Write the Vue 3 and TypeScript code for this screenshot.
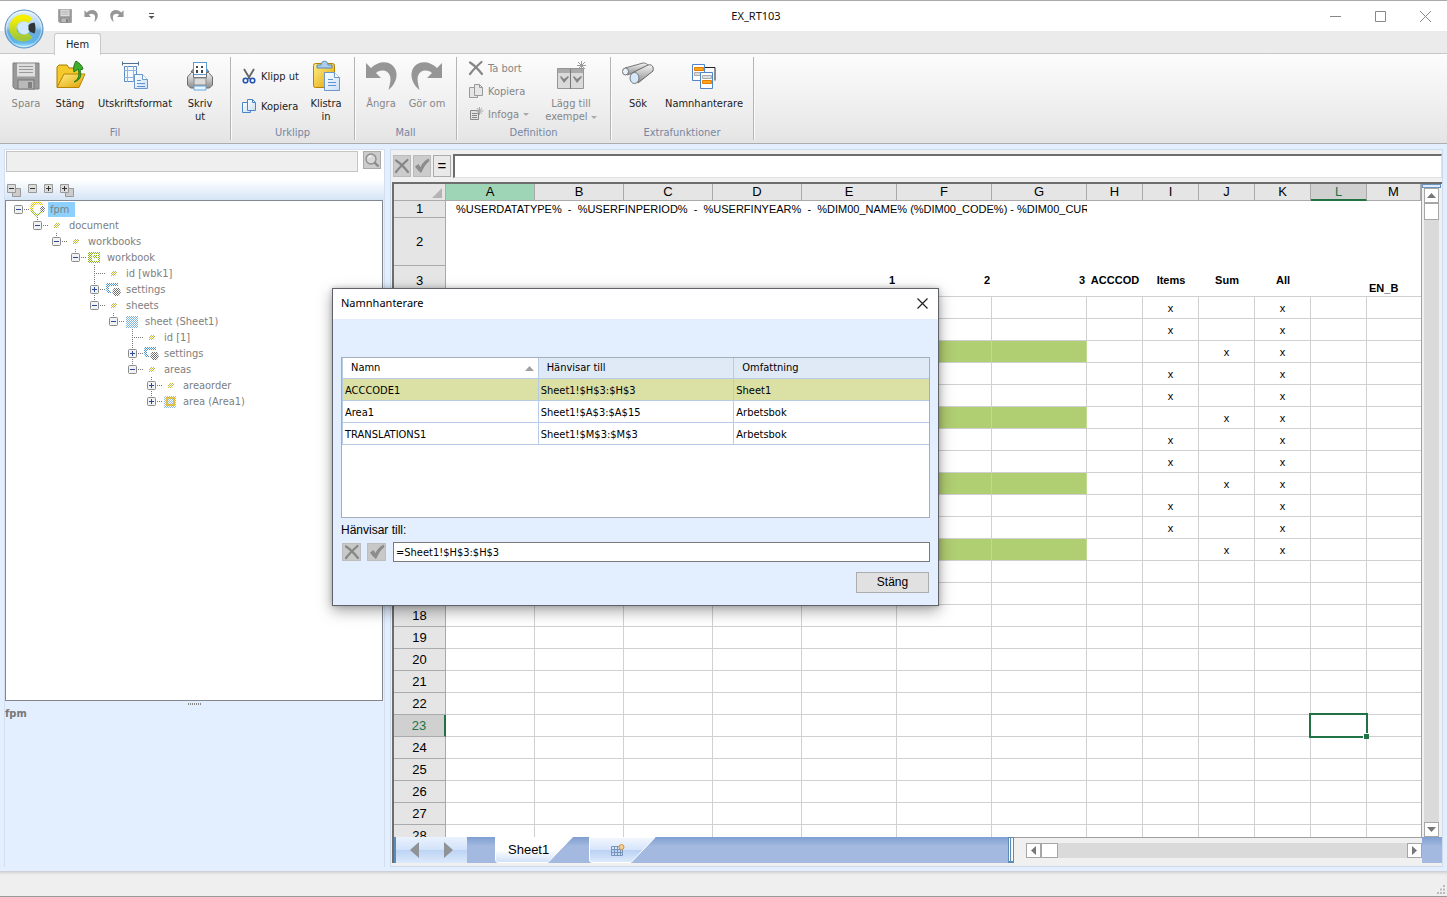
<script setup lang="ts">
import { ref } from 'vue'

interface TreeNode { label: string; depth: number; box: '' | '+' | '-'; icon: string; last: boolean }
interface DefinedName { name: string; refers: string; scope: string }

const nodes: TreeNode[] = [
  { label: 'fpm', depth: 0, box: '-', icon: 'root', last: true },
  { label: 'document', depth: 1, box: '-', icon: 'dot', last: true },
  { label: 'workbooks', depth: 2, box: '-', icon: 'dot', last: true },
  { label: 'workbook', depth: 3, box: '-', icon: 'book', last: true },
  { label: 'id [wbk1]', depth: 4, box: '', icon: 'dot', last: false },
  { label: 'settings', depth: 4, box: '+', icon: 'gear', last: false },
  { label: 'sheets', depth: 4, box: '-', icon: 'dot', last: true },
  { label: 'sheet (Sheet1)', depth: 5, box: '-', icon: 'sheet', last: true },
  { label: 'id [1]', depth: 6, box: '', icon: 'dot', last: false },
  { label: 'settings', depth: 6, box: '+', icon: 'gear', last: false },
  { label: 'areas', depth: 6, box: '-', icon: 'dot', last: true },
  { label: 'areaorder', depth: 7, box: '+', icon: 'dot', last: false },
  { label: 'area (Area1)', depth: 7, box: '+', icon: 'area', last: true },
]

const names: DefinedName[] = [
  { name: 'ACCCODE1', refers: 'Sheet1!$H$3:$H$3', scope: 'Sheet1' },
  { name: 'Area1', refers: 'Sheet1!$A$3:$A$15', scope: 'Arbetsbok' },
  { name: 'TRANSLATIONS1', refers: 'Sheet1!$M$3:$M$3', scope: 'Arbetsbok' },
]
const chosen = ref(0)
const refersTo = ref('=Sheet1!$H$3:$H$3')
const formula = ref('')
const search = ref('')

const cols = 'ABCDEFGHIJKLM'.split('')
const rows = Array.from({ length: 25 }, (_, i) => i + 4)
const sumRows = [6, 9, 12, 15]

function cell(row: number, col: string): string {
  if (row > 15) return ''
  const sum = sumRows.includes(row)
  if (col === 'K') return 'x'
  if (col === 'I' && !sum) return 'x'
  if (col === 'J' && sum) return 'x'
  return ''
}
function isGreen(row: number, col: string): boolean {
  return sumRows.includes(row) && 'ABCDEFG'.includes(col)
}
</script>

<template>
  <div class="window">
    <svg class="defs" aria-hidden="true">
      <defs>
        <linearGradient id="gGray" x1="0" y1="0" x2="0" y2="1"><stop offset="0" stop-color="#f4f4f4" /><stop offset="1" stop-color="#8c8c8c" /></linearGradient>
        <linearGradient id="gGold" x1="0" y1="0" x2="1" y2="1"><stop offset="0" stop-color="#fff08a" /><stop offset="1" stop-color="#e0a200" /></linearGradient>
        <linearGradient id="gPage" x1="0" y1="0" x2="1" y2="1"><stop offset="0" stop-color="#ffffff" /><stop offset="1" stop-color="#c9dff6" /></linearGradient>
        <linearGradient id="gTab" x1="0" y1="0" x2="0" y2="1"><stop offset="0" stop-color="#f2f7fe" /><stop offset=".48" stop-color="#d6e5fb" /><stop offset=".5" stop-color="#b9d1f3" /><stop offset="1" stop-color="#deebfc" /></linearGradient>
        <linearGradient id="gSheetTab" x1="0" y1="0" x2="0" y2="1"><stop offset=".5" stop-color="#ffffff" /><stop offset="1" stop-color="#cfe0f8" /></linearGradient>
        <linearGradient id="gOrb" x1="0" y1="0" x2="0" y2="1"><stop offset="0" stop-color="#e6f2fb" /><stop offset=".45" stop-color="#a9d0ee" /><stop offset=".55" stop-color="#6aabdd" /><stop offset=".85" stop-color="#5fb4e8" /><stop offset="1" stop-color="#b4efff" /></linearGradient>
        <linearGradient id="gC" x1="0" y1="0" x2="0" y2="1"><stop offset="0" stop-color="#f6f000" /><stop offset="1" stop-color="#a2c93a" /></linearGradient>
        <pattern id="pYellow" width="2" height="2" patternUnits="userSpaceOnUse"><path d="M0 0h1v1H0zM1 1h1v1H1z" fill="#c3bd3e" /></pattern>
        <pattern id="pGreen" width="2" height="2" patternUnits="userSpaceOnUse"><path d="M0 0h1v1H0zM1 1h1v1H1z" fill="#84b818" /></pattern>
        <pattern id="pBlue" width="2" height="2" patternUnits="userSpaceOnUse"><path d="M0 0h1v1H0zM1 1h1v1H1z" fill="#4a95d0" /></pattern>
        <pattern id="pGray" width="2" height="2" patternUnits="userSpaceOnUse"><path d="M0 0h1v1H0zM1 1h1v1H1z" fill="#6c6c6c" /></pattern>
        <pattern id="pGold" width="2" height="2" patternUnits="userSpaceOnUse"><path d="M0 0h1v1H0zM1 1h1v1H1z" fill="#e3c000" /></pattern>
      </defs>
      <symbol id="cross" viewBox="0 0 16 16"><path d="M2 2.500C6 5 10 9 14 14M13.500 2C9 6 5 10 2 14" fill="none" stroke="#868686" stroke-width="2.200" stroke-linecap="round" /></symbol>
      <symbol id="tick" viewBox="0 0 16 16"><path d="M1.500 8.500l3-2 2 3.500C8 6 11 2.500 14.500 1 15 2 15 3 14.500 3.500 11 6 9 10 7 14.500 5 13 3 11 1.500 8.500z" fill="#8d8d8d" stroke="#7c7c7c" stroke-width=".6" /></symbol>
      <symbol id="floppy" viewBox="0 0 28 28"><path d="M1 1h26v26H3l-2-2z" fill="#999" stroke="#808080" /><rect x="5" y="1.500" width="18" height="13" fill="#dedede" /><path d="M7 4.500h14M7 7.500h14M7 10.500h14" stroke="#999" /><rect x="6" y="18" width="16" height="9" fill="#b9b9b9" stroke="#777" /><rect x="16" y="20" width="4" height="6" fill="#808080" /></symbol>
      <symbol id="undo" viewBox="0 0 32 32"><path d="M1 3v15h15l-5-5c5-4 12-3 14 3 1.300 4-.5 9-1.500 14C29 26 33 18 31 11 28 1 15-1 6 8z" fill="#969696" /></symbol>
    </svg>

    <header class="titlebar">
      <button class="orb" type="button" aria-label="Programmeny">
        <svg viewBox="0 0 40 40" width="40" height="40">
          <circle cx="20" cy="20" r="19" fill="url(#gOrb)" stroke="#5a8fc0" />
          <circle cx="20" cy="20" r="17.500" fill="none" stroke="#fff" stroke-opacity=".5" />
          <path d="M26 12A10 10 0 1 0 26 26" fill="none" stroke="url(#gC)" stroke-width="7" />
          <circle cx="20" cy="19" r="6.500" fill="#cfe8fa" />
          <path d="M26.500 14.500l4-1q2 5.500 0 11l-4-1.500-2-2v-5z" fill="#2f3436" />
        </svg>
      </button>
      <nav class="quick">
        <button type="button" aria-label="Spara"><svg width="14" height="14"><use href="#floppy" /></svg></button>
        <button type="button" aria-label="Ångra"><svg width="14" height="16"><use href="#undo" /></svg></button>
        <button type="button" aria-label="Gör om"><svg class="flip" width="14" height="16"><use href="#undo" /></svg></button>
        <button type="button" class="more" aria-label="Anpassa"><svg width="7" height="7" viewBox="0 0 7 7"><path d="M1 .5h5" stroke="#555" /><path d="M.5 3h6l-3 3z" fill="#555" /></svg></button>
      </nav>
      <h1>EX_RT103</h1>
      <div class="winbtns">
        <button type="button" aria-label="Minimera"><svg width="11" height="11"><path d="M0 5.500h11" stroke="#888" /></svg></button>
        <button type="button" aria-label="Maximera"><svg width="11" height="11"><path d="M.5.5h10v10H.5z" fill="none" stroke="#888" /></svg></button>
        <button type="button" aria-label="Stäng fönster"><svg width="11" height="11"><path d="M0 0l11 11M11 0L0 11" stroke="#888" /></svg></button>
      </div>
    </header>

    <div class="tabstrip"><button type="button" class="tab">Hem</button></div>

    <div class="ribbon">
      <section class="group fil">
        <div class="tools">
          <button type="button" class="big off w42">
            <svg width="32" height="32" viewBox="0 0 32 32"><use href="#floppy" x="2" y="2" width="28" height="28" /></svg>
            <span>Spara</span>
          </button>
          <button type="button" class="big w46">
            <svg width="32" height="32" viewBox="0 0 32 32">
              <path d="M3 27V7l2-2h8l2 3h10v6" fill="#f3c92c" stroke="#ad7a00" />
              <path d="M3 27.500L10 14h21l-6 13.500z" fill="url(#gGold)" stroke="#b98300" />
              <path d="M20 22c5-3 6-8 4-13l-4 3c-1-4 0-8 2-11 3 2 6 4 7 8l-3 1c2 7 0 10-6 12z" fill="#3fae2a" stroke="#1c7a12" />
            </svg>
            <span>Stäng</span>
          </button>
          <button type="button" class="big w84">
            <svg width="32" height="32" viewBox="0 0 32 32">
              <path d="M3 3.500h17M3.500 1.500v4M19.500 1.500v4" stroke="#4f6f93" fill="none" />
              <path d="M5.500 6.500h12v15h-12z" fill="#f5faff" stroke="#5b8cc4" /><path d="M8.500 6v16M14.500 6v16M5 10.500h13M5 17.500h13" stroke="#8fb3dc" />
              <path d="M15.500 14.500h8l5 5v9h-13z" fill="url(#gPage)" stroke="#6a96cb" /><path d="M23.500 14.500v5h5" fill="#fff" stroke="#6a96cb" /><path d="M18 20.500h4M18 23.500h8M18 26.500h8" stroke="#5f93d1" />
            </svg>
            <span>Utskriftsformat</span>
          </button>
          <button type="button" class="big w46">
            <svg width="32" height="32" viewBox="0 0 32 32">
              <path d="M7 12l3-4h12l3 4z" fill="#aaa" stroke="#666" />
              <rect x="9.500" y="2.500" width="13" height="12" fill="#fff" stroke="#5f9bd3" />
              <path d="M12 6h2v2h-2zM17 6h2v2h-2zM12 10h2v3h-2zM17 10h2v3h-2z" fill="#444" />
              <path d="M3.500 17l4-4.500h2v5h13v-5h2l4 4.500v8l-3 3h-19l-3-3z" fill="url(#gGray)" stroke="#6d6d6d" />
              <path d="M10 18h12v7H10z" fill="#dadada" stroke="#8a8a8a" />
              <path d="M10 26h12v4H10z" fill="#eaf6ff" stroke="#65a7dc" />
            </svg>
            <span>Skriv<br>ut</span>
          </button>
        </div>
        <h2>Fil</h2>
      </section>

      <section class="group urklipp">
        <div class="tools">
          <div class="stack wide">
            <button type="button" class="small">
              <svg width="16" height="16" viewBox="0 0 16 16"><path d="M3 1l6 10M13 1L7 11" stroke="#666" stroke-width="1.800" /><circle cx="4.500" cy="12.500" r="2.300" fill="none" stroke="#2554b8" stroke-width="1.600" /><circle cx="11.500" cy="12.500" r="2.300" fill="none" stroke="#2554b8" stroke-width="1.600" /></svg>
              <span>Klipp ut</span>
            </button>
            <button type="button" class="small">
              <svg width="16" height="16" viewBox="0 0 16 16"><path d="M1.500 4.500h6l2 2v8h-8z" fill="url(#gPage)" stroke="#4b86c6" /><path d="M6.500 1.500h5l3 3v8h-8z" fill="url(#gPage)" stroke="#4b86c6" /><path d="M11.500 1.500v3h3" fill="none" stroke="#4b86c6" /></svg>
              <span>Kopiera</span>
            </button>
          </div>
          <button type="button" class="big w46">
            <svg width="32" height="32" viewBox="0 0 32 32">
              <rect x="3.500" y="3.500" width="21" height="24" rx="2" fill="url(#gGold)" stroke="#b58200" />
              <path d="M7 8V5h4c0-5 7-5 7 0h4v3z" fill="#a9cdee" stroke="#5b87b5" />
              <path d="M14.500 12.500h10l5 5v13h-15z" fill="url(#gPage)" stroke="#6a96cb" /><path d="M24.500 12.500v5h5" fill="#fff" stroke="#6a96cb" /><path d="M18 19.500h5M18 22.500h8M18 25.500h8" stroke="#5f93d1" />
            </svg>
            <span>Klistra<br>in</span>
          </button>
        </div>
        <h2>Urklipp</h2>
      </section>

      <section class="group mall">
        <div class="tools">
          <button type="button" class="big off w46"><svg width="32" height="32"><use href="#undo" /></svg><span>Ångra</span></button>
          <button type="button" class="big off w46"><svg class="flip" width="32" height="32"><use href="#undo" /></svg><span>Gör om</span></button>
        </div>
        <h2>Mall</h2>
      </section>

      <section class="group definition">
        <div class="tools">
          <div class="stack">
            <button type="button" class="small off"><svg width="16" height="16"><use href="#cross" /></svg><span>Ta bort</span></button>
            <button type="button" class="small off">
              <svg width="16" height="16" viewBox="0 0 16 16"><path d="M1.500 4.500h6l2 2v8h-8z" fill="#e6e6e6" stroke="#999" /><path d="M6.500 1.500h5l3 3v8h-8z" fill="#e6e6e6" stroke="#999" /><path d="M11.500 1.500v3h3" fill="none" stroke="#999" /></svg>
              <span>Kopiera</span>
            </button>
            <button type="button" class="small off">
              <svg width="16" height="16" viewBox="0 0 16 16"><path d="M2.500 4.500h8v9h-8z" fill="#e3e3e3" stroke="#888" /><path d="M4 7.500h5M4 9.500h5M4 11.500h5" stroke="#888" /><path d="M11.500 1v8M7.500 5h8M9 2l5 6M14 2L9 8" stroke="#aaa" /></svg>
              <span>Infoga</span><i class="caret" />
            </button>
          </div>
          <button type="button" class="big off w66">
            <svg width="32" height="32" viewBox="0 0 32 32"><path d="M2.500 8.500h26v20h-26z" fill="#dadada" stroke="#959595" /><path d="M3 9h25v4H3z" fill="#aaa" /><path d="M15.500 9v20" stroke="#777" /><path d="M5 17l4 6 5-6-1-1-4 3-3-3zM18 17l4 6 5-6-1-1-4 3-3-3z" fill="#858585" /><path d="M26.500 1v9M22 5.500h9M23 2l7 7M30 2l-7 7" stroke="#9b9b9b" /></svg>
            <span>Lägg till<br>exempel <i class="caret" /></span>
          </button>
        </div>
        <h2>Definition</h2>
      </section>

      <section class="group extra">
        <div class="tools">
          <button type="button" class="big w42">
            <svg width="34" height="32" viewBox="0 0 34 32">
              <path d="M4 8L22 3c4 0 6 2 5 5L6 15z" fill="url(#gGray)" stroke="#777" /><ellipse cx="4.500" cy="11.500" rx="3" ry="3.500" fill="#e9f2fb" stroke="#777" />
              <path d="M11 13L27 5c4-1 6 2 5 6L17 23z" fill="url(#gGray)" stroke="#666" /><ellipse cx="13.500" cy="18" rx="4.500" ry="5.500" fill="#d5e7fa" stroke="#777" />
            </svg>
            <span>Sök</span>
          </button>
          <button type="button" class="big w90">
            <svg width="32" height="32" viewBox="0 0 32 32">
              <path d="M14 7.500h13v13" fill="none" stroke="#222" />
              <path d="M4.500 4.500h12v16h-12z" fill="#fff" stroke="#4f85c9" /><path d="M6.500 7.500h9v3h-9z" fill="#ffa318" stroke="#e47d00" /><path d="M6.500 12.500h8v3h-8z" fill="#ddd" stroke="#aaa" />
              <path d="M12.500 12.500h12v16h-12z" fill="#fff" stroke="#4f85c9" /><path d="M14.500 15.500h9v3h-9z" fill="#ddd" stroke="#aaa" /><path d="M14.500 20.500h9v3h-9z" fill="#ffa318" stroke="#e47d00" />
            </svg>
            <span>Namnhanterare</span>
          </button>
        </div>
        <h2>Extrafunktioner</h2>
      </section>
    </div>

    <main class="body">
      <aside class="side">
        <div class="searchrow">
          <input v-model="search" type="text" aria-label="Sök i trädet">
          <button type="button" aria-label="Sök"><svg width="16" height="16" viewBox="0 0 16 16"><circle cx="7" cy="7" r="5" fill="#d9d9d9" stroke="#8f8f8f" stroke-width="1.400" /><path d="M4.500 6q.5-2 3-2" fill="none" stroke="#fff" /><path d="M10.500 10.500l4 4" stroke="#8a8a8a" stroke-width="2.400" /></svg></button>
        </div>
        <div class="treetools">
          <button type="button" aria-label="Fäll ihop alla"><svg width="14" height="13" viewBox="0 0 14 13"><path d="M5.500 4.500h8v8h-8z" fill="#ccc" stroke="#999" /><path d="M.5.5h8v8h-8z" fill="#dcdcdc" stroke="#999" /><path d="M2 4.500h5" stroke="#333" /></svg></button>
          <button type="button" aria-label="Fäll ihop"><svg width="9" height="13" viewBox="0 0 9 13"><path d="M.5.5h8v8h-8z" fill="#dcdcdc" stroke="#999" /><path d="M2 4.500h5" stroke="#333" /></svg></button>
          <button type="button" aria-label="Expandera"><svg width="9" height="13" viewBox="0 0 9 13"><path d="M.5.5h8v8h-8z" fill="#dcdcdc" stroke="#999" /><path d="M2 4.500h5M4.500 2v5" stroke="#333" /></svg></button>
          <button type="button" aria-label="Expandera alla"><svg width="14" height="13" viewBox="0 0 14 13"><path d="M5.500 4.500h8v8h-8z" fill="#ccc" stroke="#999" /><path d="M.5.5h8v8h-8z" fill="#dcdcdc" stroke="#999" /><path d="M2 4.500h5M4.500 2v5" stroke="#333" /></svg></button>
        </div>
        <ul class="tree">
          <li v-for="(n, i) in nodes" :key="i" :style="{ paddingLeft: 8 + n.depth * 19 + 'px' }">
            <svg class="joint" width="15" height="16" viewBox="0 0 15 16">
              <path v-if="n.depth" d="M4.500 0v8" stroke="#777" stroke-dasharray="1 1" />
              <path v-if="!n.last" d="M4.500 8v8" stroke="#777" stroke-dasharray="1 1" />
              <path d="M4 8.500h11" stroke="#777" stroke-dasharray="1 1" />
              <g v-if="n.box"><rect x=".5" y="4.500" width="8" height="8" rx="1" fill="#f2f2f2" stroke="#8b8b8b" /><path :d="n.box === '+' ? 'M2 8.500h5M4.500 6v5' : 'M2 8.500h5'" stroke="#2b4a9b" /></g>
            </svg>
            <svg class="nicon" width="16" height="16" viewBox="0 0 16 16">
              <g v-if="n.icon === 'dot'"><path d="M6 11V8l2-2h4v2l-2 3z" fill="url(#pYellow)" /></g>
              <g v-else-if="n.icon === 'root'"><path d="M4 1h8l2 3h-3L9 3 6 4 4 7v4H2L1 7l1-4z" fill="url(#pGold)" /><path d="M1 8h3l1 3 3 2 3-2h3l-6 5-5-4z" fill="url(#pGreen)" /><path d="M12 5h3l1 3-1 3h-3l-1-3z" fill="url(#pGray)" /></g>
              <g v-else-if="n.icon === 'book'"><path d="M2 3h12v11H2zM6 5v7h6V5z" fill-rule="evenodd" fill="url(#pGreen)" /><path d="M7 6h4v3H7z" fill="url(#pGreen)" /></g>
              <g v-else-if="n.icon === 'gear'"><path d="M2 2h11v3H4v5h2v2H3L1 9V4z" fill="url(#pBlue)" /><path d="M9 7h5l2 4-2 4h-4l-3-4z" fill="url(#pGray)" /></g>
              <g v-else-if="n.icon === 'sheet'"><path d="M2 3h12v12H2z" fill="url(#pBlue)" opacity=".7" /></g>
              <g v-else><path d="M2 3h12v12H2z" fill="url(#pBlue)" opacity=".6" /><path d="M4 4h9v9H4zM6 6v5h5V6z" fill-rule="evenodd" fill="#e9b100" opacity=".7" /></g>
            </svg>
            <span :class="['tlabel', { picked: i === 0 }]">{{ n.label }}</span>
          </li>
        </ul>
        <div class="grip"><i v-for="k in 7" :key="k" /></div>
        <div class="info">fpm</div>
      </aside>

      <section class="book">
        <div class="formulabar">
          <button type="button" class="fx" aria-label="Avbryt"><svg width="16" height="16"><use href="#cross" /></svg></button>
          <button type="button" class="fx" aria-label="Godkänn"><svg width="16" height="16"><use href="#tick" /></svg></button>
          <button type="button" class="fx eq">=</button>
          <input v-model="formula" type="text" aria-label="Formel">
        </div>
        <div class="sheetframe">
          <div class="gridrow">
            <div class="gridwrap">
              <table class="grid">
                <colgroup>
                  <col class="c52"><col v-for="k in 4" :key="'a' + k" class="c89"><col v-for="k in 3" :key="'b' + k" class="c95"><col v-for="k in 5" :key="'c' + k" class="c56"><col>
                </colgroup>
                <thead>
                  <tr><th class="corner"><svg width="10" height="10"><path d="M10 0v10H0z" fill="#b4b4b4" /></svg></th><th v-for="c in cols" :key="c" :class="{ first: c === 'A', current: c === 'L' }">{{ c }}</th></tr>
                </thead>
                <tbody>
                  <tr class="r1 plain"><th>1</th><td colspan="7" class="heading">%USERDATATYPE% &nbsp;-&nbsp; %USERFINPERIOD% &nbsp;-&nbsp; %USERFINYEAR% &nbsp;-&nbsp; %DIM00_NAME% (%DIM00_CODE%) - %DIM00_CUR</td><td colspan="6" /></tr>
                  <tr class="r2 plain"><th>2</th><td colspan="13" /></tr>
                  <tr class="r3 plain"><th>3</th><td colspan="4" /><td class="num">1</td><td class="num">2</td><td class="num">3</td><td>ACCCOD</td><td>Items</td><td>Sum</td><td>All</td><td /><td class="low">EN_B</td></tr>
                  <tr v-for="r in rows" :key="r">
                    <th :class="{ current: r === 23 }">{{ r }}</th>
                    <td v-for="c in cols" :key="c" :class="{ green: isGreen(r, c) }">{{ cell(r, c) }}<i v-if="r === 23 && c === 'L'" class="cursor" /></td>
                  </tr>
                </tbody>
              </table>
            </div>
            <div class="vscroll">
              <div class="split" />
              <button type="button" aria-label="Rulla upp"><svg width="9" height="5"><path d="M0 5l4.500-5L9 5z" fill="#777" /></svg></button>
              <div class="vtrack"><div class="thumb" /></div>
              <button type="button" aria-label="Rulla ned"><svg width="9" height="5"><path d="M0 0l4.500 5L9 0z" fill="#777" /></svg></button>
            </div>
          </div>
          <div class="sheetbar">
            <div class="tabs">
              <div class="tabnav">
                <button type="button" aria-label="Föregående blad"><svg width="9" height="16"><path d="M9 0v16L0 8z" fill="#8f9296" /></svg></button>
                <button type="button" aria-label="Nästa blad"><svg width="9" height="16"><path d="M0 0v16l9-8z" fill="#8f9296" /></svg></button>
              </div>
              <button type="button" class="stab">
                <svg width="78" height="26"><path d="M.5 0h77L53 25.500H3q-2.500 0-2.500-3z" fill="url(#gSheetTab)" stroke="#fff" /></svg>
                <span>Sheet1</span>
              </button>
              <button type="button" class="stab ntab" aria-label="Nytt blad">
                <svg width="67" height="26"><path d="M.5.500h65.500L42 25.500H3q-2.500 0-2.500-3z" fill="url(#gTab)" stroke="#fff" /><path d="M22.500 9.500h11v9h-11zM22 12.500h12M22 15.500h12M25.500 9v10M28.500 9v10M31.500 9v10" fill="none" stroke="#7894ba" /><circle cx="32.500" cy="10" r="2.500" fill="#f1cf9a" stroke="#dc9433" /></svg>
              </button>
            </div>
            <div class="hsplit" />
            <div class="hscroll">
              <button type="button" aria-label="Rulla vänster"><svg width="5" height="9"><path d="M5 0L0 4.500 5 9z" fill="#777" /></svg></button>
              <div class="htrack"><div class="thumb" /></div>
              <button type="button" aria-label="Rulla höger"><svg width="5" height="9"><path d="M0 0l5 4.500L0 9z" fill="#777" /></svg></button>
            </div>
            <div class="fill" />
          </div>
        </div>
      </section>
    </main>

    <footer class="status"><svg width="9" height="9" viewBox="0 0 9 9"><path d="M7 0h2v2H7zM4 3.500h2v2H4zM7 3.500h2v2H7zM1 7h2v2H1zM4 7h2v2H4zM7 7h2v2H7z" fill="#bbb" /></svg></footer>

    <section class="dialog" role="dialog" aria-labelledby="dlgTitle">
      <header>
        <h2 id="dlgTitle">Namnhanterare</h2>
        <button type="button" aria-label="Stäng dialog"><svg width="11" height="11"><path d="M.5.500l10 10M10.500.500l-10 10" stroke="#222" stroke-width="1.200" /></svg></button>
      </header>
      <div class="dbody">
        <div class="listbox">
          <table>
            <thead><tr><th class="sorted"><span>Namn</span><svg width="9" height="5"><path d="M0 5l4.500-5L9 5z" fill="#a0a0a0" /></svg></th><th>Hänvisar till</th><th>Omfattning</th></tr></thead>
            <tbody>
              <tr v-for="(n, i) in names" :key="n.name" :class="{ chosen: i === chosen }" @click="chosen = i"><td>{{ n.name }}</td><td>{{ n.refers }}</td><td>{{ n.scope }}</td></tr>
            </tbody>
          </table>
        </div>
        <label for="refers">Hänvisar till:</label>
        <div class="refrow">
          <button type="button" aria-label="Avbryt"><svg width="16" height="16"><use href="#cross" /></svg></button>
          <button type="button" aria-label="Godkänn"><svg width="16" height="16"><use href="#tick" /></svg></button>
          <input id="refers" v-model="refersTo" type="text">
        </div>
        <button type="button" class="close">Stäng</button>
      </div>
    </section>
  </div>
</template>

<style>
html, body { margin: 0; }
</style>

<style scoped>
* { box-sizing: border-box; }
.window { position: relative; display: flex; flex-direction: column; height: 100vh; overflow: hidden; background: #fff; color: #222; font: 11px/13px "DejaVu Sans Condensed", "DejaVu Sans", sans-serif; }
.defs { position: absolute; width: 0; height: 0; }
button { display: flex; align-items: center; justify-content: center; margin: 0; padding: 0; border: 0; background: none; color: inherit; font: inherit; }
input { margin: 0; padding: 0 2px; border-radius: 0; outline: 0; font: inherit; color: #000; }
h1, h2 { margin: 0; font: inherit; }
svg { display: block; flex: none; }
.flip { transform: scaleX(-1); }

.titlebar { position: relative; flex: none; display: flex; align-items: center; height: 31px; padding-left: 58px; border-top: 1px solid #aaa; }
.orb { position: absolute; left: 4px; top: 8px; z-index: 2; }
.quick { flex: none; display: flex; align-items: center; gap: 12px; width: 224px; }
.quick .more { margin-left: 12px; }
.titlebar h1 { flex: 1; text-align: center; font: 11px/16px "Noto Sans", sans-serif; color: #111; }
.winbtns { flex: none; display: flex; gap: 34px; width: 217px; justify-content: flex-end; padding-right: 16px; }

.tabstrip { flex: none; height: 23px; padding: 2px 0 0 54px; background: #ebebeb; border-bottom: 1px solid #c9c9c9; }
.tab { position: relative; height: 22px; width: 47px; background: #fcfcfc; border: 1px solid #c9c9c9; border-bottom: 0; border-radius: 3px 3px 0 0; }

.ribbon { flex: none; display: flex; height: 90px; padding: 3px 0; background: linear-gradient(#fcfcfc, #f0f0f0 55%, #e4e4e4); border-bottom: 1px solid #adadad; box-shadow: 0 1px 2px #c4c4c4; }
.group { display: flex; flex-direction: column; border-right: 1px solid #b5b5b5; box-shadow: 1px 0 #fafafa; }
.group h2 { text-align: center; color: #7686a3; line-height: 14px; }
.tools { flex: 1; display: flex; align-items: flex-start; padding-top: 3px; }
.fil { width: 231px; }
.fil .tools { padding-left: 5px; }
.urklipp { width: 124px; }
.urklipp .tools { padding-left: 10px; }
.mall { width: 102px; }
.mall .tools { padding-left: 3px; }
.definition { width: 154px; }
.definition .tools { padding-left: 11px; }
.extra { width: 143px; }
.extra .tools { padding-left: 6px; }
.big { flex-direction: column; flex: none; text-align: center; gap: 5px; white-space: nowrap; }
.off { color: #868686; }
.w42 { width: 42px; } .w46 { width: 46px; } .w66 { width: 66px; } .w84 { width: 84px; } .w90 { width: 90px; }
.stack { display: flex; flex-direction: column; gap: 7px; width: 70px; }
.stack.wide { gap: 14px; width: 62px; padding-top: 8px; }
.small { height: 16px; justify-content: flex-start; gap: 4px; white-space: nowrap; }
.caret { display: inline-block; vertical-align: middle; border: 3px solid transparent; border-top-color: #aaa; border-bottom: 0; }

.body { flex: 1; min-height: 0; display: flex; gap: 5px; padding: 5px 4px 4px; background: #e3eefe; }
.side { flex: none; width: 381px; display: flex; flex-direction: column; border: 1px solid #d3dfee; border-width: 1px 1px 0 1px; }
.searchrow { display: flex; align-items: flex-start; gap: 5px; height: 24px; padding: 1px 3px 0 1px; background: #fff; }
.searchrow input { flex: 1; height: 21px; border: 1px solid #c5c5c5; background: #efefef; }
.searchrow button { width: 18px; height: 18px; border: 1px solid #aaa; background: #ccc; }
.treetools { display: flex; align-items: center; gap: 7px; height: 26px; padding: 6px 2px 0; background: linear-gradient(#fff, #fff 20%, #d5e4f6); }
.tree { flex: 1; min-height: 0; margin: 0; padding: 0; list-style: none; background: #fff; border: 1px solid #828790; width: 378px; overflow: hidden; }
.tree li { display: flex; align-items: center; height: 16px; }
.tlabel { margin-left: 3px; padding: 0 4px 0 2px; line-height: 15px; color: #808080; }
.picked { padding-right: 6px; background: #8cd0fd; }
.grip { display: flex; gap: 1px; justify-content: center; height: 4px; padding-top: 2px; }
.grip i { width: 1px; height: 2px; background: #888; }
.info { height: 162px; padding-top: 2px; font-weight: bold; color: #777; }

.book { flex: 1; min-width: 0; display: flex; flex-direction: column; padding: 4px 0 3px 2px; background: #f0f0f0; border: 1px solid #ccdcec; }
.formulabar { flex: none; display: flex; gap: 2px; height: 24px; align-items: center; }
.fx { width: 18px; height: 22px; background: #cbcbcb; border: 1px solid #bbb; }
.fx.eq { background: #e9e9e9; border-color: #aaa; font: 15px/18px "Liberation Sans", sans-serif; color: #000; }
.formulabar input { flex: 1; height: 24px; background: #fff; border: 2px solid #6d6d6d; border-width: 2px 1px 1px 2px; border-right-color: #e0e0e0; border-bottom-color: #e0e0e0; }
.sheetframe { flex: 1; min-height: 0; margin: 4px 0 0 -1px; display: flex; flex-direction: column; border: solid #6d6d6d; border-width: 2px 0 0 2px; }
.gridrow { flex: 1; min-height: 0; display: flex; }
.gridwrap { flex: 1; min-width: 0; overflow: hidden; background: #fff; border-right: 1px solid #a0a0a0; }
.grid { width: 100%; table-layout: fixed; border-collapse: separate; border-spacing: 0; font: 11px/14px "Liberation Sans", Arial, sans-serif; color: #000; }
.c52 { width: 52px; } .c89 { width: 89px; } .c95 { width: 95px; } .c56 { width: 56px; }
.grid th { padding: 0; height: 22px; background: #e5e5e5; border: solid #aaa; border-width: 0 1px 1px 0; font-weight: normal; font-size: 13px; text-align: center; }
.grid thead th { height: 17px; }
.grid th.first { background: #9fd5b7; }
.grid th.current { background: #d0d0d0; color: #217346; }
.grid thead th.current { border-bottom: 2px solid #217346; }
.grid tbody th.current { border-right: 2px solid #217346; }
.corner svg { margin: 2px 3px 0 auto; }
.grid td { position: relative; padding: 0; height: 22px; border: solid #d0d0d0; border-width: 0 1px 1px 0; text-align: center; white-space: nowrap; }
.grid tr td:last-child { border-right: 0; }
.grid .plain td { border-right: 0; }
.grid .r1 th, .grid .r1 td { height: 17px; border-bottom-color: transparent; }
.grid .r1 th { border-bottom-color: #aaa; }
.grid .heading { padding-left: 10px; text-align: left; overflow: hidden; }
.grid .r2 th { height: 48px; }
.grid .r2 td { border-bottom: 0; }
.grid .r3 th { height: 31px; }
.grid .r3 td { font-weight: bold; padding-bottom: 2px; }
.grid .r3 .num { text-align: right; padding-right: 2px; }
.grid .r3 .low { text-align: left; padding: 14px 0 0 2px; }
.grid td.green { background: #b0ce72; border-right-color: #c0d890; }
.cursor { position: absolute; z-index: 1; left: -2px; top: -2px; right: -2px; bottom: -2px; border: 2px solid #217346; }
.cursor::after { content: ""; position: absolute; right: -3px; bottom: -3px; width: 5px; height: 5px; background: #217346; box-shadow: -1px -1px #fff; }
.vscroll { flex: none; display: flex; flex-direction: column; width: 20px; padding: 0 3px 0 2px; background: #f0f0f0; }
.split { flex: none; height: 4px; margin: 0 -2px; border: 1px solid #6d93bd; background: #dcecff; }
.vscroll button, .hscroll button { flex: none; width: 15px; height: 15px; background: #fff; border: 1px solid #a6a6a6; }
.vtrack { flex: 1; background: #dadada; }
.vtrack .thumb { width: 15px; height: 17px; background: #fff; border: 1px solid #a6a6a6; }
.sheetbar { flex: none; display: flex; height: 26px; }
.tabs { flex: 612; display: flex; background: linear-gradient(#7f9fd1, #a3b9df 35%); border-left: 2px solid #5d8bb3; }
.tabnav { display: flex; width: 71px; margin-right: 28px; justify-content: center; gap: 25px; background: linear-gradient(#e9f2fe, #d3e3fa 48%, #bcd3f4 50%, #dceafc); }
.stab { position: relative; width: 78px; margin-right: 16px; justify-content: flex-start; font: 13px/18px "Liberation Sans", Arial, sans-serif; color: #000; }
.stab svg { position: absolute; left: 0; top: 0; }
.stab span { position: relative; padding-left: 13px; }
.ntab { width: 67px; }
.hsplit { flex: none; width: 6px; background: #e6f1ff; border: 1px solid #5d8bb3; border-width: 1px 1px 2px; box-shadow: inset 1px 0 #fff, inset -1px 0 #fff, inset 2px 0 #5d8bb3; }
.hscroll { flex: 396; display: flex; align-items: center; padding-left: 12px; background: #f0f0f0; border-top: 1px solid #a0a0a0; }
.htrack { flex: 1; height: 15px; background: #dadada; }
.htrack .thumb { width: 17px; height: 15px; background: #fff; border: 1px solid #a6a6a6; }
.fill { flex: none; width: 20px; background: linear-gradient(#7f9fd1, #a3b9df 35%); }

.status { flex: none; display: flex; justify-content: flex-end; align-items: flex-end; height: 26px; padding: 2px; background: linear-gradient(#c9ccd2, #e9e9e9 3px, #efefef 5px); border-bottom: 1px solid #999; }

.dialog { position: absolute; z-index: 3; left: 332px; top: 288px; width: 607px; border: 1px solid #5f6266; background: #e3eefe; box-shadow: 0 5px 14px rgba(0, 0, 0, .35), 0 0 5px rgba(0, 0, 0, .2); color: #000; }
.dialog header { display: flex; align-items: center; justify-content: space-between; height: 30px; padding: 0 10px 2px 8px; background: #fff; }
.dialog header h2 { font: 11px/16px "Noto Sans", sans-serif; }
.dbody { display: flex; flex-direction: column; padding: 38px 8px 12px; }
.listbox { height: 161px; background: #fff; border: 1px solid #a4adba; }
.listbox table { width: 100%; table-layout: fixed; border-collapse: separate; border-spacing: 0; }
.listbox th { height: 21px; padding: 0 8px 2px; text-align: left; font-weight: normal; background: #dfeaf6; border: solid #b8cbe6; border-width: 0 0 1px 1px; }
.listbox th.sorted { background: #fff; }
.sorted span { float: left; }
.sorted svg { float: right; margin: 5px -4px 0 0; }
.listbox td { height: 22px; padding: 2px 2px 0; border: solid #b8cbe6; border-width: 0 0 1px 1px; }
.listbox .chosen td { background: #dbe0a5; }
.dbody label { margin: 5px 0; line-height: 14px; font-family: "Liberation Sans", Arial, sans-serif; font-size: 12px; }
.refrow { display: flex; align-items: center; padding-left: 1px; }
.refrow button { width: 19px; height: 18px; margin-right: 6px; background: #c8c8c8; border: 1px solid #bdbdbd; }
.refrow input { flex: 1; height: 20px; margin-left: 1px; border: 1px solid #7a7a7a; }
.close { align-self: flex-end; width: 73px; height: 21px; margin: 10px 1px 0 0; border: 1px solid #adadad; background: #e1e1e1; font: 12px/15px "Liberation Sans", Arial, sans-serif; }
</style>
